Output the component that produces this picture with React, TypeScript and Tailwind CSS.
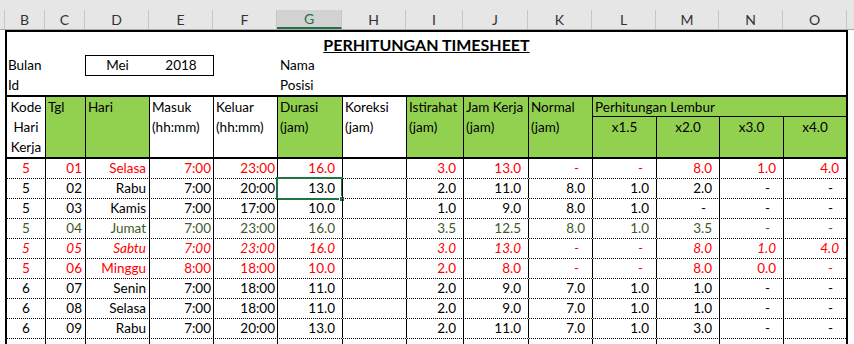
import React from "react";

const COLS =
  "grid grid-cols-[38px_40px_64px_64px_64px_65px_64px_57px_65px_64px_64px_63px_64px_63px]";

type Tone = "red" | "redi" | "black" | "olive";
type Row = { v: string[]; tone: Tone };

const rows: Row[] = [
  { v: ["5", "01", "Selasa", "7:00", "23:00", "16.0", "", "3.0", "13.0", "-", "-", "8.0", "1.0", "4.0"], tone: "red" },
  { v: ["5", "02", "Rabu", "7:00", "20:00", "13.0", "", "2.0", "11.0", "8.0", "1.0", "2.0", "-", "-"], tone: "black" },
  { v: ["5", "03", "Kamis", "7:00", "17:00", "10.0", "", "1.0", "9.0", "8.0", "1.0", "-", "-", "-"], tone: "black" },
  { v: ["5", "04", "Jumat", "7:00", "23:00", "16.0", "", "3.5", "12.5", "8.0", "1.0", "3.5", "-", "-"], tone: "olive" },
  { v: ["5", "05", "Sabtu", "7:00", "23:00", "16.0", "", "3.0", "13.0", "-", "-", "8.0", "1.0", "4.0"], tone: "redi" },
  { v: ["5", "06", "Minggu", "8:00", "18:00", "10.0", "", "2.0", "8.0", "-", "-", "8.0", "0.0", "-"], tone: "red" },
  { v: ["6", "07", "Senin", "7:00", "18:00", "11.0", "", "2.0", "9.0", "7.0", "1.0", "1.0", "-", "-"], tone: "black" },
  { v: ["6", "08", "Selasa", "7:00", "18:00", "11.0", "", "2.0", "9.0", "7.0", "1.0", "1.0", "-", "-"], tone: "black" },
  { v: ["6", "09", "Rabu", "7:00", "20:00", "13.0", "", "2.0", "11.0", "7.0", "1.0", "3.0", "-", "-"], tone: "black" },
  { v: ["", "", "", "", "", "", "", "", "", "", "", "", "", ""], tone: "black" },
];

const toneClass: Record<Tone, string> = {
  red: "text-[#ff0000]",
  redi: "text-[#ff0000] italic",
  black: "text-[#000000]",
  olive: "text-[#3d5a2b]",
};

const letters: { l: string; w: string; sel?: boolean }[] = [
  { l: "", w: "w-[5px]" },
  { l: "B", w: "w-[40px]" },
  { l: "C", w: "w-[40px]" },
  { l: "D", w: "w-[64px]" },
  { l: "E", w: "w-[64px]" },
  { l: "F", w: "w-[64px]" },
  { l: "G", w: "w-[65px]", sel: true },
  { l: "H", w: "w-[64px]" },
  { l: "I", w: "w-[57px]" },
  { l: "J", w: "w-[65px]" },
  { l: "K", w: "w-[64px]" },
  { l: "L", w: "w-[64px]" },
  { l: "M", w: "w-[63px]" },
  { l: "N", w: "w-[64px]" },
  { l: "O", w: "w-[64px]" },
  { l: "", w: "w-[7px]" },
];

function cellAlign(i: number, val: string) {
  if (i === 0) return "justify-center";
  if (i <= 2) return "justify-end pr-[3px]";
  if (i <= 4) return "justify-end pr-[2px]";
  if (val === "-") return "justify-end pr-[13px]";
  return "justify-end pr-[7px]";
}

export default function App() {
  const font = { fontFamily: "Lato, 'Open Sans', sans-serif" };
  return (
    <div
      className="w-[854px] h-[344px] overflow-hidden bg-white text-[13.5px] text-black"
      style={font}
    >
      {/* top strip */}
      <div className="h-[10px] bg-[#e6e6e6]" />
      {/* column letters */}
      <div className="flex h-[20px] bg-[#e6e6e6] border-b border-[#ababab]">
        {letters.map((c, i) => (
          <div
            key={i}
            className={`${c.w} shrink-0 flex items-center justify-center text-[14px] leading-none ${
              i < letters.length - 1 ? "border-r border-[#c6c6c6]" : ""
            } ${c.sel ? "bg-[#d2d2d2] text-[#217346] border-b-2 border-b-[#217346]" : "text-[#333]"}`}
          >
            {c.l}
          </div>
        ))}
      </div>

      <div className="flex">
        <div className="w-[5px] shrink-0" />
        <div className="w-[843px] shrink-0 border-x-2 border-t-2 border-black">
          {/* title */}
          <div className="h-[23px] flex items-end justify-center">
            <span className="font-bold underline text-[16px] leading-[20px]">
              PERHITUNGAN TIMESHEET
            </span>
          </div>
          {/* Bulan row */}
          <div className={`${COLS} h-[21px]`}>
            <div className="col-span-2 pl-[1px] leading-[21px]">Bulan</div>
            <div className="col-span-2 w-[129px] h-[21px] border border-black grid grid-cols-[63px_64px]">
              <div className="text-center leading-[19px]">Mei</div>
              <div className="text-center leading-[19px]">2018</div>
            </div>
            <div />
            <div className="col-span-2 pl-[3px] leading-[21px]">Nama</div>
          </div>
          {/* Id row */}
          <div className={`${COLS} h-[19px]`}>
            <div className="col-span-2 pl-[1px] leading-[19px]">Id</div>
            <div />
            <div />
            <div />
            <div className="col-span-2 pl-[3px] leading-[19px]">Posisi</div>
          </div>

          {/* header */}
          <div
            className={`${COLS} grid-rows-[20px_40px] border-t-2 border-b-2 border-black leading-[20px]`}
          >
            <div className="row-span-2 flex flex-col items-center">
              <span>Kode</span>
              <span>Hari</span>
              <span>Kerja</span>
            </div>
            <div className="row-span-2 border-l border-black bg-[#92d050] pl-[2px]">Tgl</div>
            <div className="row-span-2 border-l border-black bg-[#92d050] pl-[2px]">Hari</div>
            <div className="row-span-2 border-l border-black pl-[2px] flex flex-col">
              <span>Masuk</span>
              <span>(hh:mm)</span>
            </div>
            <div className="row-span-2 border-l border-black pl-[2px] flex flex-col">
              <span>Keluar</span>
              <span>(hh:mm)</span>
            </div>
            <div className="row-span-2 border-l border-black bg-[#92d050] pl-[2px] flex flex-col">
              <span>Durasi</span>
              <span>(jam)</span>
            </div>
            <div className="row-span-2 border-l border-black pl-[2px] flex flex-col">
              <span>Koreksi</span>
              <span>(jam)</span>
            </div>
            <div className="row-span-2 border-l border-black bg-[#92d050] pl-[2px] flex flex-col">
              <span>Istirahat</span>
              <span>(jam)</span>
            </div>
            <div className="row-span-2 border-l border-black bg-[#92d050] pl-[2px] flex flex-col whitespace-nowrap">
              <span>Jam Kerja</span>
              <span>(jam)</span>
            </div>
            <div className="row-span-2 border-l border-black bg-[#92d050] pl-[2px] flex flex-col">
              <span>Normal</span>
              <span>(jam)</span>
            </div>
            <div className="col-span-4 border-l border-b border-black bg-[#92d050] pl-[2px] whitespace-nowrap">
              Perhitungan Lembur
            </div>
            {["x1.5", "x2.0", "x3.0", "x4.0"].map((x) => (
              <div key={x} className="border-l border-black bg-[#92d050] text-center">
                {x}
              </div>
            ))}
          </div>

          {/* data rows */}
          {rows.map((r, ri) => (
            <div
              key={ri}
              className={`${COLS} h-[20px] border-b border-dotted border-black ${toneClass[r.tone]}`}
            >
              {r.v.map((val, i) => (
                <div
                  key={i}
                  className={`relative flex items-center leading-[19px] whitespace-nowrap ${
                    i > 0 ? "border-l border-solid border-black" : ""
                  } ${cellAlign(i, val)}`}
                >
                  {val}
                  {ri === 1 && i === 5 && (
                    <>
                      <div className="absolute left-[-2px] top-[-2px] right-[-1px] bottom-[-2px] border-2 border-[#217346] pointer-events-none" />
                      <div className="absolute right-[-3px] bottom-[-4px] w-[6px] h-[6px] bg-[#217346] border border-white" />
                    </>
                  )}
                </div>
              ))}
            </div>
          ))}
        </div>
      </div>
    </div>
  );
}
